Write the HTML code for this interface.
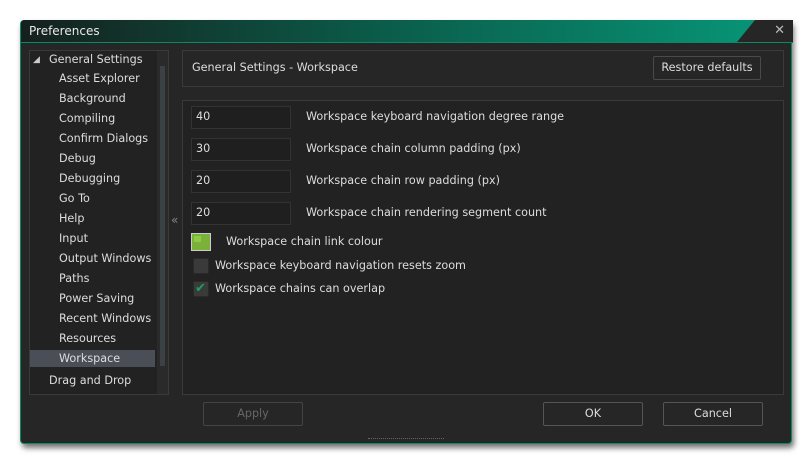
<!DOCTYPE html>
<html><head><style>
*{margin:0;padding:0;box-sizing:border-box}
body{width:812px;height:463px;background:#fff;position:relative;font-family:"DejaVu Sans","Liberation Sans",sans-serif;font-size:11.2px;color:#ddd;overflow:hidden}
.win{position:absolute;left:20px;top:20px;width:772px;height:424px;background:#262626;border:1px solid #0a8a64;border-top:none;border-radius:4px;box-shadow:2px 4px 6px rgba(0,0,0,.55)}
.title{position:absolute;left:0;top:0;width:772px;height:23px;background:linear-gradient(90deg,#15201d 0%,#0b5a48 45%,#07997a 100%);border-radius:4px 4px 0 0;border-bottom:1px solid #0a8a64}
.title span{position:absolute;left:8px;top:4px;color:#e8e8e8;font-size:12px}
.tab{position:absolute;right:0;top:0;width:56px;height:22px;background:#262626;clip-path:polygon(18px 0,100% 0,100% 100%,0 100%)}
.x{position:absolute;right:8px;top:3px;color:#bbb;font-size:13px}
.p{position:absolute;border:1px solid #3a3a3a;background:#222}
.it{position:absolute;left:29px;color:#ddd}
.in{position:absolute;left:191px;width:100px;height:23px;background:#1f1f1f;border:1px solid #333;padding:3px 4px;color:#ddd}
.lb{position:absolute;left:306px;color:#ddd}
.btn{position:absolute;top:402px;width:100px;height:24px;border:1px solid #555;border-radius:2px;background:#262626;text-align:center;line-height:22px;color:#ddd}
.cb{position:absolute;left:193px;width:16px;height:16px;background:#3a3a3a;border:1px solid #2a2a2a;border-radius:2px}
</style></head><body>
<div class="win">
<div class="title"><span>Preferences</span><div class="tab"></div><div class="x">✕</div></div>
</div>
<div class="p" style="left:29px;top:50px;width:140px;height:345px"></div>
<div style="position:absolute;left:157px;top:51px;width:11px;height:343px;background:#2a2a2a"></div>
<div style="position:absolute;left:160px;top:66px;width:5px;height:300px;background:#3c4146"></div>
<div style="position:absolute;left:30px;top:350px;width:125px;height:17px;background:#4a4f57"></div>
<div style="position:absolute;left:33px;top:55px;font-size:9px;color:#ccc">◢</div>
<div class="it" style="left:49px;top:53px">General Settings</div>
<div class="it" style="left:59px;top:72px">Asset Explorer</div>
<div class="it" style="left:59px;top:92px">Background</div>
<div class="it" style="left:59px;top:112px">Compiling</div>
<div class="it" style="left:59px;top:132px">Confirm Dialogs</div>
<div class="it" style="left:59px;top:152px">Debug</div>
<div class="it" style="left:59px;top:172px">Debugging</div>
<div class="it" style="left:59px;top:192px">Go To</div>
<div class="it" style="left:59px;top:212px">Help</div>
<div class="it" style="left:59px;top:232px">Input</div>
<div class="it" style="left:59px;top:252px">Output Windows</div>
<div class="it" style="left:59px;top:272px">Paths</div>
<div class="it" style="left:59px;top:292px">Power Saving</div>
<div class="it" style="left:59px;top:312px">Recent Windows</div>
<div class="it" style="left:59px;top:332px">Resources</div>
<div class="it" style="left:59px;top:352px">Workspace</div>
<div class="it" style="left:49px;top:374px">Drag and Drop</div>
<div style="position:absolute;left:171px;top:213px;color:#888;font-size:12px">«</div>
<div class="p" style="left:182px;top:50px;width:602px;height:37px;background:#262626"></div>
<div style="position:absolute;left:192px;top:61px">General Settings - Workspace</div>
<div class="btn" style="left:653px;top:56px;width:108px;height:24px;border-color:#4a4a4a">Restore defaults</div>
<div class="p" style="left:182px;top:100px;width:602px;height:295px"></div>
<div class="in" style="top:106px">40</div><div class="lb" style="top:110px">Workspace keyboard navigation degree range</div>
<div class="in" style="top:138px">30</div><div class="lb" style="top:142px">Workspace chain column padding (px)</div>
<div class="in" style="top:170px">20</div><div class="lb" style="top:174px">Workspace chain row padding (px)</div>
<div class="in" style="top:202px">20</div><div class="lb" style="top:206px">Workspace chain rendering segment count</div>
<div style="position:absolute;left:191px;top:233px;width:20px;height:18px;border:1px solid #ccc;background:#7bb03a"></div>
<div style="position:absolute;left:194px;top:236px;width:7px;height:6px;background:#8fca45"></div>
<div class="lb" style="left:226px;top:235px">Workspace chain link colour</div>
<div class="cb" style="top:258px"></div><div class="lb" style="left:215px;top:259px">Workspace keyboard navigation resets zoom</div>
<div class="cb" style="top:281px"></div><div style="position:absolute;left:195px;top:281px;color:#1aa060;font-size:13px;font-weight:bold">✔</div>
<div class="lb" style="left:215px;top:282px">Workspace chains can overlap</div>
<div class="btn" style="left:203px;color:#666;border-color:#444">Apply</div>
<div class="btn" style="left:543px">OK</div>
<div class="btn" style="left:663px">Cancel</div>
<div style="position:absolute;left:368px;top:438px;width:76px;height:3px;border-top:1px dotted #666"></div>
</body></html>
